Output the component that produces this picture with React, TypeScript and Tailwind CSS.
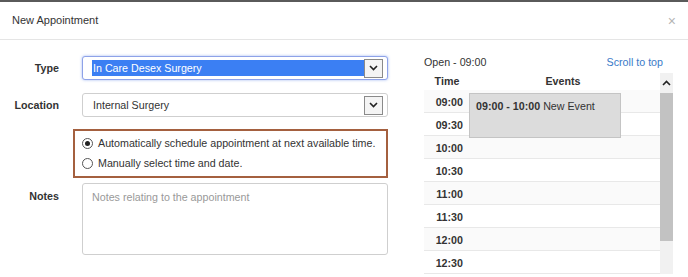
import React from 'react';

const font = { fontFamily: '"Liberation Sans", Arial, sans-serif' };

const Chevron = ({ up = false }: { up?: boolean }) => (
  <svg width="9" height="6" viewBox="0 0 9 6" className={up ? 'rotate-180' : ''}>
    <path d="M1 1 L4.5 4.5 L8 1" fill="none" stroke="#222" strokeWidth="1.6" />
  </svg>
);

const SelectBox = ({ value, focused }: { value: string; focused?: boolean }) => (
  <div
    className={
      'flex items-center h-[24px] w-[306px] rounded-[3px] border bg-white pl-[9px] pr-[4px] ' +
      (focused
        ? 'border-[#8ea2e8] shadow-[0_0_3px_rgba(102,140,233,0.6)]'
        : 'border-[#cfcfcf]')
    }
  >
    <div
      className={
        'flex-1 h-[16px] flex items-center pl-[1px] ' +
        (focused ? 'bg-[#3b7ff3] text-white' : 'text-[#333]')
      }
    >
      {value}
    </div>
    <div className="w-[19px] h-[19px] border border-[#8a8a8a] bg-[#f4f4f4] flex items-center justify-center">
      <Chevron />
    </div>
  </div>
);

const Radio = ({ checked, label }: { checked?: boolean; label: string }) => (
  <div className="flex items-center gap-[5px] h-[20px]">
    <span className="w-[11px] h-[11px] rounded-full border border-[#555] bg-white flex items-center justify-center">
      {checked && <span className="w-[5px] h-[5px] rounded-full bg-[#222]" />}
    </span>
    <span className="text-[#333]">{label}</span>
  </div>
);

const times = ['09:00', '09:30', '10:00', '10:30', '11:00', '11:30', '12:00', '12:30'];

export default function App() {
  return (
    <div style={font} className="w-[688px] h-[277px] overflow-hidden bg-white text-[10.7px] text-[#333] border-t-2 border-[#5a5a5a]">
      <div className="h-[38px] border-b border-[#e5e5e5] flex items-center justify-between pl-[12px] pr-[12px]">
        <span className="text-[11px] text-[#333]">New Appointment</span>
        <span className="text-[14px] text-[#b5b5b5] leading-none">×</span>
      </div>

      <div className="flex">
        <div className="w-[400px] pt-[16px]">
          <div className="flex items-center">
            <div className="w-[59px] text-right font-bold">Type</div>
            <div className="ml-[23px]">
              <SelectBox value="In Care Desex Surgery" focused />
            </div>
          </div>
          <div className="flex items-center mt-[13px]">
            <div className="w-[59px] text-right font-bold">Location</div>
            <div className="ml-[23px]">
              <SelectBox value="Internal Surgery" />
            </div>
          </div>
          <div className="ml-[73px] mt-[12px] w-[315px] h-[49px] border-2 border-[#a4603f] pl-[7px] pt-[2px]">
            <Radio checked label="Automatically schedule appointment at next available time." />
            <Radio label="Manually select time and date." />
          </div>
          <div className="flex items-start mt-[5px]">
            <div className="w-[59px] text-right font-bold pt-[5px]">Notes</div>
            <div className="ml-[23px] w-[306px] h-[72px] border border-[#cfcfcf] rounded-[3px] px-[9px] pt-[5px] text-[#999]">
              Notes relating to the appointment
            </div>
          </div>
        </div>

        <div className="ml-[24px] w-[250px] pt-[15px]">
          <div className="flex justify-between pr-[11px] h-[14px] items-center">
            <span>Open - 09:00</span>
            <span className="text-[#3a7bc8]">Scroll to top</span>
          </div>
          <div className="flex mt-[4px]">
            <div className="w-[236px]">
              <div className="flex h-[17px] items-center font-bold">
                <div className="w-[42px] text-center pl-[4px]">Time</div>
                <div className="flex-1 text-center">Events</div>
              </div>
              <div className="relative">
                {times.map((t, i) => (
                  <div
                    key={t}
                    className={
                      'flex h-[23px] border-b border-[#e8e8e8] ' + (i % 2 === 0 ? 'bg-[#fafafa]' : 'bg-white')
                    }
                  >
                    <div className="w-[42px] text-right pr-[3px] pt-[4px] font-bold">{t}</div>
                    <div className="flex-1" />
                  </div>
                ))}
                <div className="absolute left-[45px] top-[3px] w-[152px] h-[45px] bg-[#dcdcdc] border border-[#c4c4c4] pl-[6px] pt-[4px]">
                  <span className="font-bold">09:00 - 10:00</span> New Event
                </div>
              </div>
            </div>
            <div className="w-[13px] bg-[#f1f1f1] flex flex-col">
              <div className="h-[20px] flex items-center justify-center">
                <Chevron up />
              </div>
              <div className="h-[148px] bg-[#c2c2c2]" />
            </div>
          </div>
        </div>
      </div>
    </div>
  );
}
